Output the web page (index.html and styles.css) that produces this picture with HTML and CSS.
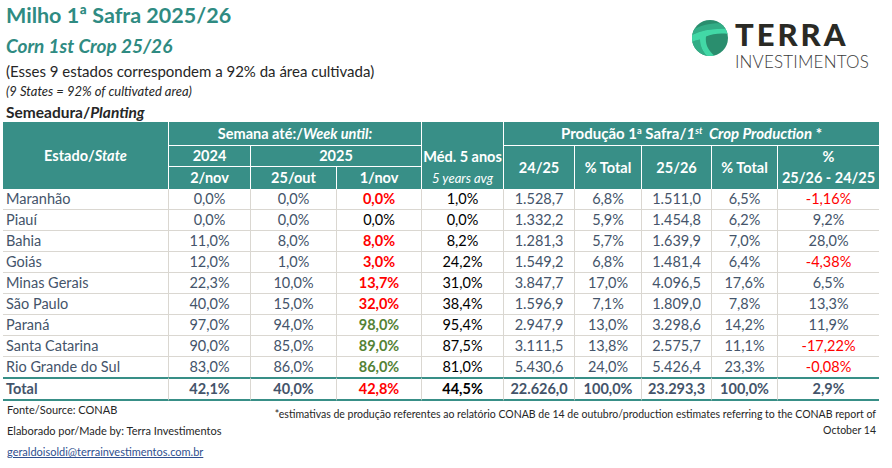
FILE: index.html
```html
<!DOCTYPE html>
<html lang="pt-BR">
<head>
<meta charset="utf-8">
<title>Milho 1ª Safra 2025/26</title>
<link rel="stylesheet" href="styles.css">
</head>
<body>
<div class="sheet">
  <header class="top">
    <div class="titles">
      <h1 class="title">Milho 1ª Safra 2025/26</h1>
      <h2 class="subtitle">Corn 1st Crop 25/26</h2>
      <p class="note">(Esses 9 estados correspondem a 92% da área cultivada)</p>
      <p class="note-en">(9 States = 92% of cultivated area)</p>
      <p class="section">Semeadura/<i>Planting</i></p>
    </div>
    <div class="logo">
      <svg class="logo-mark" viewBox="0 0 36 36" width="36" height="36" aria-hidden="true">
        <defs><clipPath id="lc"><circle cx="18" cy="18" r="18"/></clipPath></defs>
        <g clip-path="url(#lc)">
          <rect width="36" height="36" fill="#2a8e6e"/>
          <path d="M0 15 C10 10 22 8 36 9 L36 4 C22 2 10 5 0 10 Z" fill="#33ad86"/>
          <path d="M0 22 C2 21 5 20 8 19.5 C8 25 10 31 16 37 L0 37 Z" fill="#33ad86"/>
          <path d="M0 15 C10 10 22 8 36 9 L36 14 C28 13 20 14 14 16.5 C13 24 16 31 24 37 L16 37 C10 31 8 25 8 19.5 C5 20 2 21 0 22 Z" fill="#42d8a6"/>
        </g>
      </svg>
      <div class="logo-text">
        <span class="logo-name">TERRA</span>
        <span class="logo-sub">INVESTIMENTOS</span>
      </div>
    </div>
  </header>

  <table class="grid">
    <colgroup>
      <col class="c-state"><col class="c-2024"><col class="c-out"><col class="c-nov"><col class="c-med">
      <col class="c-p1"><col class="c-t1"><col class="c-p2"><col class="c-t2"><col class="c-var">
    </colgroup>
    <thead>
      <tr>
        <th rowspan="3" class="state-h">Estado/<i>State</i></th>
        <th colspan="3" class="r1">Semana até:/<i>Week until:</i></th>
        <th rowspan="3" class="med"><span class="med-pt">Méd. 5 anos</span><span class="med-en">5 years avg</span></th>
        <th colspan="5" class="r1 end prod">Produção 1<sup>a</sup> Safra/<i>1<sup>st</sup>&nbsp; Crop Production</i> *</th>
      </tr>
      <tr>
        <th class="r2">2024</th>
        <th colspan="2" class="r2">2025</th>
        <th rowspan="2">24/25</th>
        <th rowspan="2">% Total</th>
        <th rowspan="2">25/26</th>
        <th rowspan="2">% Total</th>
        <th rowspan="2" class="end pct"><span>%</span><span>25/26 - 24/25</span></th>
      </tr>
      <tr>
        <th class="r3">2/nov</th>
        <th class="r3">25/out</th>
        <th class="r3">1/nov</th>
      </tr>
    </thead>
    <tbody>
      <tr><td class="name">Maranhão</td><td>0,0%</td><td>0,0%</td><td class="red">0,0%</td><td class="avg">1,0%</td><td>1.528,7</td><td>6,8%</td><td>1.511,0</td><td>6,5%</td><td class="end neg">-1,16%</td></tr>
      <tr><td class="name">Piauí</td><td>0,0%</td><td>0,0%</td><td class="avg">0,0%</td><td class="avg">0,0%</td><td>1.332,2</td><td>5,9%</td><td>1.454,8</td><td>6,2%</td><td class="end">9,2%</td></tr>
      <tr><td class="name">Bahia</td><td>11,0%</td><td>8,0%</td><td class="red">8,0%</td><td class="avg">8,2%</td><td>1.281,3</td><td>5,7%</td><td>1.639,9</td><td>7,0%</td><td class="end">28,0%</td></tr>
      <tr><td class="name">Goiás</td><td>12,0%</td><td>1,0%</td><td class="red">3,0%</td><td class="avg">24,2%</td><td>1.549,2</td><td>6,8%</td><td>1.481,4</td><td>6,4%</td><td class="end neg">-4,38%</td></tr>
      <tr><td class="name">Minas Gerais</td><td>22,3%</td><td>10,0%</td><td class="red">13,7%</td><td class="avg">31,0%</td><td>3.847,7</td><td>17,0%</td><td>4.096,5</td><td>17,6%</td><td class="end">6,5%</td></tr>
      <tr><td class="name">São Paulo</td><td>40,0%</td><td>15,0%</td><td class="red">32,0%</td><td class="avg">38,4%</td><td>1.596,9</td><td>7,1%</td><td>1.809,0</td><td>7,8%</td><td class="end">13,3%</td></tr>
      <tr><td class="name">Paraná</td><td>97,0%</td><td>94,0%</td><td class="green">98,0%</td><td class="avg">95,4%</td><td>2.947,9</td><td>13,0%</td><td>3.298,6</td><td>14,2%</td><td class="end">11,9%</td></tr>
      <tr><td class="name">Santa Catarina</td><td>90,0%</td><td>85,0%</td><td class="green">89,0%</td><td class="avg">87,5%</td><td>3.111,5</td><td>13,8%</td><td>2.575,7</td><td>11,1%</td><td class="end neg">-17,22%</td></tr>
      <tr class="last"><td class="name">Rio Grande do Sul</td><td>83,0%</td><td>86,0%</td><td class="green">86,0%</td><td class="avg">81,0%</td><td>5.430,6</td><td>24,0%</td><td>5.426,4</td><td>23,3%</td><td class="end neg">-0,08%</td></tr>
    </tbody>
    <tfoot>
      <tr class="total"><td class="name">Total</td><td>42,1%</td><td>40,0%</td><td class="red">42,8%</td><td class="avg">44,5%</td><td>22.626,0</td><td>100,0%</td><td>23.293,3</td><td>100,0%</td><td class="end">2,9%</td></tr>
    </tfoot>
  </table>

  <footer class="foot">
    <div class="foot-left">
      <p>Fonte/Source: CONAB</p>
      <p>Elaborado por/Made by: Terra Investimentos</p>
      <p><a class="mail" href="mailto:geraldoisoldi@terrainvestimentos.com.br">geraldoisoldi@terrainvestimentos.com.br</a></p>
    </div>
    <p class="foot-note">*estimativas de produção referentes ao relatório CONAB de 14 de outubro/production estimates referring to the CONAB report of<br>October 14</p>
  </footer>
</div>
</body>
</html>
```

FILE: styles.css
```css
* { box-sizing: border-box; }

html, body {
  margin: 0;
  padding: 0;
  background: #ffffff;
}

body {
  width: 892px;
  height: 468px;
  overflow: hidden;
  font-family: Lato, "Open Sans", sans-serif;
  color: #44546a;
}

p, h1, h2 { margin: 0; }

.sheet {
  padding: 0 13px 0 3px;
}

/* ---------- top ---------- */
.top {
  display: flex;
  justify-content: space-between;
  align-items: flex-start;
  height: 122px;
}

.titles {
  padding-left: 3px;
}

.title {
  font-size: 21.5px;
  font-weight: 700;
  line-height: 30px;
  color: #2f8b82;
}

.subtitle {
  font-size: 19px;
  font-weight: 700;
  font-style: italic;
  line-height: 32px;
  color: #2f8b82;
}

.note {
  font-size: 15px;
  line-height: 18px;
  color: #262626;
}

.note-en {
  font-size: 13px;
  font-style: italic;
  line-height: 22px;
  color: #262626;
}

.section {
  font-size: 15.5px;
  font-weight: 700;
  line-height: 20px;
  color: #262626;
}

.logo {
  display: flex;
  align-items: flex-start;
  gap: 7px;
  margin-top: 19px;
  margin-right: 10px;
}

.logo-mark {
  display: block;
  margin-top: 1px;
}

.logo-text {
  display: flex;
  flex-direction: column;
}

.logo-name {
  font-size: 31px;
  font-weight: 900;
  line-height: 30px;
  letter-spacing: 3px;
  color: #2a2a25;
}

.logo-sub {
  margin-top: 2px;
  font-size: 17px;
  font-weight: 300;
  line-height: 22px;
  letter-spacing: 0.2px;
  color: #3b3b3b;
}

/* ---------- table ---------- */
.grid {
  border-collapse: separate;
  border-spacing: 0;
  table-layout: fixed;
  width: 876px;
  font-size: 14.5px;
}

.c-state { width: 166px; }
.c-2024 { width: 82px; }
.c-out { width: 86px; }
.c-nov { width: 85px; }
.c-med { width: 82px; }
.c-p1 { width: 71px; }
.c-t1 { width: 67px; }
.c-p2 { width: 70px; }
.c-t2 { width: 66px; }
.c-var { width: 101px; }

.grid th {
  padding: 0;
  background: #388f87;
  color: #ffffff;
  font-weight: 700;
  text-align: center;
  vertical-align: middle;
  white-space: nowrap;
  line-height: 20px;
  border-right: 1px solid #ffffff;
}

.grid th.r1 {
  line-height: 23px;
  border-bottom: 1px solid #ffffff;
}

.grid th.prod {
  font-size: 15px;
}

.grid th.r2 {
  border-bottom: 1px solid #ffffff;
}

.grid th.r3 {
  line-height: 22px;
}

.grid th.med {
  vertical-align: bottom;
}

.med span,
.pct span {
  display: block;
}

.med-pt { line-height: 21px; }

.med-en {
  line-height: 22px;
  font-size: 13px;
  font-weight: 400;
  font-style: italic;
}

.pct span:first-child { line-height: 21px; }
.pct span:last-child { line-height: 22px; }

.grid sup {
  font-size: 0.62em;
  line-height: 0;
  vertical-align: 0.55em;
}

.grid td {
  padding: 0;
  line-height: 20px;
  text-align: center;
  white-space: nowrap;
  border-right: 1px solid #dad7d1;
  border-bottom: 1px solid #dad7d1;
}

.grid .end { border-right: none; }

.grid td.name {
  text-align: left;
  padding-left: 3px;
}

.grid tr.last td { border-bottom: none; }

.grid tr.total td {
  font-weight: 700;
  border-top: 2px solid #388f87;
  border-bottom: 2px solid #388f87;
}

.grid td.avg { color: #000000; }
.grid td.red { color: #ff0000; font-weight: 700; }
.grid td.green { color: #548235; font-weight: 700; }
.grid td.neg { color: #ff0000; }

/* ---------- footer ---------- */
.foot {
  display: flex;
  margin-top: -2px;
  font-size: 11px;
  color: #262626;
}

.foot-left {
  width: 269px;
  padding-left: 4px;
  line-height: 21px;
}

.mail {
  color: #2f4f8f;
  text-decoration: underline;
}

.foot-note {
  width: 604px;
  padding-top: 7px;
  font-size: 10.5px;
  line-height: 16px;
  text-align: right;
  white-space: nowrap;
}
```
